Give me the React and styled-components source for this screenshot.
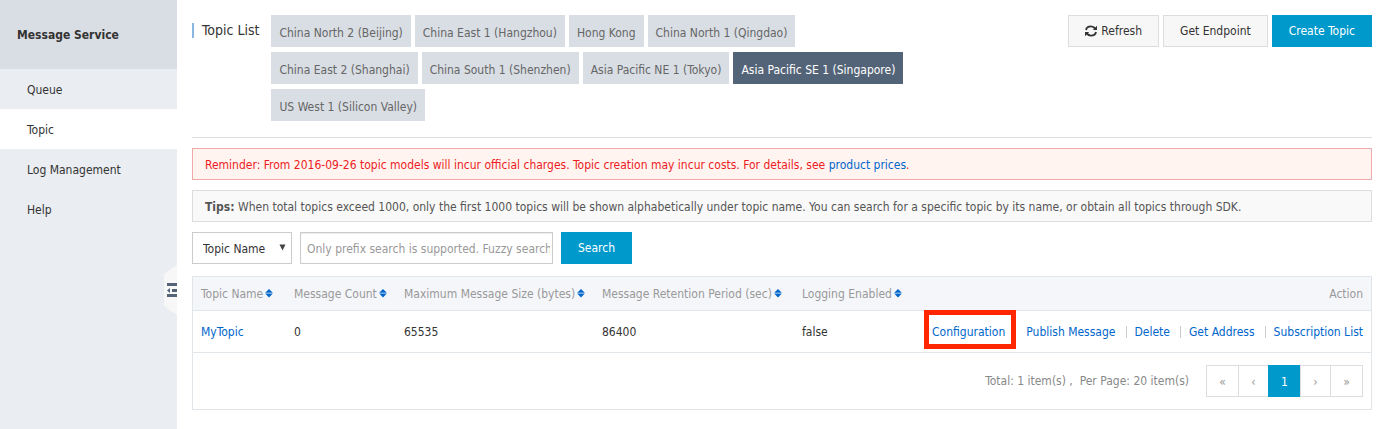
import { useState } from 'react';
import styled, { createGlobalStyle } from 'styled-components';

const GlobalStyle = createGlobalStyle`
    * {
        box-sizing: border-box;
    }
    body {
        margin: 0;
        background-color: #fff;
        color: #333;
    }
    body, button, input, select {
        font-family: "DejaVu Sans Condensed", "DejaVu Sans", sans-serif;
        font-size: 12px;
        line-height: 18px;
    }
    a {
        color: #06c;
        text-decoration: none;
    }
`;

const Page = styled.div`
    display: flex;
    min-height: 100vh;
`;

const Sidebar = styled.aside`
    flex: 0 0 177px;
    background-color: #eaedf1;
    display: flex;
    flex-direction: column;
`;
const Product = styled.div`
    height: 69px;
    padding-left: 17px;
    display: flex;
    align-items: center;
    background-color: #d9dee4;
    font-weight: bold;
`;
const Nav = styled.nav`
    display: flex;
    flex-direction: column;
`;
const NavLink = styled.a`
    height: 40px;
    padding: 2px 0 0 27px;
    display: flex;
    align-items: center;
    color: #333;
    background-color: ${props => props.$active ? "#fff" : "transparent"};
`;
const Collapse = styled.button`
    align-self: flex-end;
    width: 13px;
    height: 50px;
    margin-top: 36px;
    padding: 0;
    border: none;
    background: none;
    cursor: pointer;
    svg {
        display: block;
    }
`;

const Main = styled.main`
    flex: 1;
    min-width: 0;
    padding: 15px 10px 19px 15px;
`;

const Header = styled.header`
    display: flex;
    align-items: flex-start;
    padding-bottom: 16px;
    border-bottom: 1px solid #ddd;
`;
const Title = styled.h1`
    margin: 8px 12px 0 0;
    padding-left: 8px;
    border-left: 2px solid #88b7e0;
    font-size: 14px;
    line-height: 15px;
    font-weight: normal;
    white-space: nowrap;
`;
const Regions = styled.div`
    flex: 0 1 660px;
    display: flex;
    flex-wrap: wrap;
    gap: 5px 4px;
`;
const Region = styled.button`
    height: 32px;
    padding: 3px 8px 0;
    border: none;
    white-space: nowrap;
    cursor: pointer;
    color: ${props => props.$active ? "#fff" : "#666"};
    background-color: ${props => props.$active ? "#546478" : "#d9dee4"};
`;
const Buttons = styled.div`
    display: flex;
    gap: 4px;
    margin-left: auto;
`;
const Button = styled.button`
    height: 32px;
    padding: 0 16px;
    display: flex;
    align-items: center;
    gap: 4px;
    white-space: nowrap;
    cursor: pointer;
    border: 1px solid ${props => props.$primary ? "#09c" : "#ddd"};
    background-color: ${props => props.$primary ? "#09c" : "#f7f7f7"};
    color: ${props => props.$primary ? "#fff" : "#333"};
`;

const Notice = styled.p`
    margin: 10px 0 0;
    padding: 7px 12px 5px;
    border: 1px solid ${props => props.$warn ? "#f1a9a9" : "#ddd"};
    background-color: ${props => props.$warn ? "#fff4f0" : "#f9f9f9"};
    color: ${props => props.$warn ? "#ed1c24" : "#555"};
`;

const SearchBar = styled.form`
    display: flex;
    gap: 8px;
    margin: 10px 0 12px;
`;
const SelectBox = styled.div`
    position: relative;
    svg {
        position: absolute;
        right: 6px;
        top: 12px;
        pointer-events: none;
    }
`;
const Select = styled.select`
    appearance: none;
    width: 100px;
    height: 32px;
    padding: 2px 10px 0;
    border: 1px solid #ccc;
    border-radius: 0;
    background-color: #fff;
    color: #333;
`;
const Input = styled.input`
    width: 253px;
    height: 32px;
    padding: 2px 2px 0 6px;
    border: 1px solid #ccc;
    box-shadow: inset 0 1px 1px rgba(0, 0, 0, 0.08);
    &::placeholder {
        color: #999;
    }
`;

const Panel = styled.section`
    border: 1px solid #e1e6eb;
`;
const Table = styled.table`
    width: 100%;
    border-collapse: separate;
    border-spacing: 0;
    table-layout: fixed;
`;
const Col = styled.col`
    width: ${props => props.$width};
`;
const Th = styled.th`
    height: 34px;
    padding: 0 8px;
    background-color: #f5f6fa;
    border-bottom: 1px solid #e1e6eb;
    color: #999;
    font-weight: normal;
    white-space: nowrap;
    text-align: ${props => props.$right ? "right" : "left"};
`;
const Td = styled.td`
    height: 42px;
    padding: 0 8px;
    border-bottom: 1px solid #e1e6eb;
    white-space: nowrap;
`;
const SortButton = styled.button`
    padding: 0;
    border: none;
    background: none;
    color: inherit;
    display: flex;
    align-items: center;
    gap: 2px;
    cursor: pointer;
`;
const Actions = styled.div`
    display: flex;
    justify-content: flex-end;
    align-items: center;
    height: 41px;
`;
const Action = styled.a`
    & + & {
        margin-left: 10px;
        padding-left: 9px;
        background: linear-gradient(#ccc, #ccc) no-repeat 0 3px / 1px 12px;
    }
`;
const MarkedAction = styled.a`
    margin: 0 15px 4px 0;
    padding: 8px 6px 3px 3px;
    outline: 5px solid #ff2600;
`;

const Footer = styled.footer`
    display: flex;
    justify-content: flex-end;
    padding: 12px 8px;
    color: #888;
`;
const Totals = styled.span`
    margin-right: 18px;
    line-height: 32px;
    white-space: pre;
`;
const Pager = styled.div`
    display: flex;
`;
const PageButton = styled.button`
    height: 32px;
    width: ${props => props.$wide ? "33px" : "31px"};
    margin-left: -1px;
    padding: 2px 0 0;
    cursor: pointer;
    border: 1px solid ${props => props.$active ? "#09c" : "#ddd"};
    background-color: ${props => props.$active ? "#09c" : "#fff"};
    color: ${props => props.$active ? "#fff" : "#999"};
`;

const regions = [
    "China North 2 (Beijing)",
    "China East 1 (Hangzhou)",
    "Hong Kong",
    "China North 1 (Qingdao)",
    "China East 2 (Shanghai)",
    "China South 1 (Shenzhen)",
    "Asia Pacific NE 1 (Tokyo)",
    "Asia Pacific SE 1 (Singapore)",
    "US West 1 (Silicon Valley)",
];

const columns = [
    { label: "Topic Name", width: "93px" },
    { label: "Message Count", width: "110px" },
    { label: "Maximum Message Size (bytes)", width: "198px" },
    { label: "Message Retention Period (sec)", width: "200px" },
    { label: "Logging Enabled", width: "120px" },
];

const SortIcon = () => (
    <svg width="8" height="10" viewBox="0 0 8 10" fill="#06c" aria-hidden="true">
        <path d="M4 0L7.800 3.800H0.200Z" />
        <path d="M4 8.400L7.800 4.600H0.200Z" />
    </svg>
);

const RefreshIcon = () => (
    <svg width="12" height="12" viewBox="0 0 12 12" fill="none" stroke="#333" strokeWidth="1.900" aria-hidden="true">
        <path d="M1 5C1.500 2.600 3.500 1.400 6 1.400C7.800 1.400 9.200 2.200 10.200 3.600" />
        <path d="M11 7C10.500 9.400 8.500 10.600 6 10.600C4.200 10.600 2.800 9.800 1.800 8.400" />
        <path d="M12 0.800V5H7.800Z" fill="#333" stroke="none" />
        <path d="M0 11.200V7H4.200Z" fill="#333" stroke="none" />
    </svg>
);

const App = () => {
    const [region, setRegion] = useState("Asia Pacific SE 1 (Singapore)");
    const [keyword, setKeyword] = useState("");

    return (
        <>
            <GlobalStyle />
            <Page>
                <Sidebar>
                    <Product>Message Service</Product>
                    <Nav>
                        <NavLink href="#queue">Queue</NavLink>
                        <NavLink href="#topic" $active>Topic</NavLink>
                        <NavLink href="#log">Log Management</NavLink>
                        <NavLink href="#help">Help</NavLink>
                    </Nav>
                    <Collapse aria-label="Collapse menu">
                        <svg width="13" height="50" viewBox="0 0 13 50">
                            <path d="M13 0L0 9V41L13 50Z" fill="#f7f7f7" />
                            <path d="M3 18h10v3H3zM3 29h10v3H3zM8 24h5v3H8zM3 25.500L6 23v5z" fill="#546478" />
                        </svg>
                    </Collapse>
                </Sidebar>
                <Main>
                    <Header>
                        <Title>Topic List</Title>
                        <Regions>
                            {regions.map((name) => (
                                <Region key={name} $active={name === region} onClick={() => setRegion(name)}>
                                    {name}
                                </Region>
                            ))}
                        </Regions>
                        <Buttons>
                            <Button><RefreshIcon />Refresh</Button>
                            <Button>Get Endpoint</Button>
                            <Button $primary>Create Topic</Button>
                        </Buttons>
                    </Header>
                    <Notice $warn>
                        Reminder: From 2016-09-26 topic models will incur official charges. Topic creation may incur costs. For details, see <a href="#prices">product prices</a>.
                    </Notice>
                    <Notice>
                        <b>Tips:</b> When total topics exceed 1000, only the first 1000 topics will be shown alphabetically under topic name. You can search for a specific topic by its name, or obtain all topics through SDK.
                    </Notice>
                    <SearchBar onSubmit={(e) => e.preventDefault()}>
                        <SelectBox>
                            <Select aria-label="Search by">
                                <option>Topic Name</option>
                            </Select>
                            <svg width="7" height="7" viewBox="0 0 7 7" fill="#444" aria-hidden="true">
                                <path d="M0.500 0.500H6.500L3.500 6.500Z" />
                            </svg>
                        </SelectBox>
                        <Input
                            aria-label="Topic name"
                            placeholder="Only prefix search is supported. Fuzzy search is not supported"
                            value={keyword}
                            onChange={(e) => setKeyword(e.target.value)}
                        />
                        <Button $primary>Search</Button>
                    </SearchBar>
                    <Panel>
                        <Table>
                            <colgroup>
                                {columns.map((col) => <Col key={col.label} $width={col.width} />)}
                                <Col $width="auto" />
                            </colgroup>
                            <thead>
                                <tr>
                                    {columns.map((col) => (
                                        <Th key={col.label}>
                                            <SortButton>{col.label}<SortIcon /></SortButton>
                                        </Th>
                                    ))}
                                    <Th $right>Action</Th>
                                </tr>
                            </thead>
                            <tbody>
                                <tr>
                                    <Td><a href="#mytopic">MyTopic</a></Td>
                                    <Td>0</Td>
                                    <Td>65535</Td>
                                    <Td>86400</Td>
                                    <Td>false</Td>
                                    <Td>
                                        <Actions>
                                            <MarkedAction href="#configuration">Configuration</MarkedAction>
                                            <Action href="#publish">Publish Message</Action>
                                            <Action href="#delete">Delete</Action>
                                            <Action href="#address">Get Address</Action>
                                            <Action href="#subscriptions">Subscription List</Action>
                                        </Actions>
                                    </Td>
                                </tr>
                            </tbody>
                        </Table>
                        <Footer>
                            <Totals>Total: 1 item(s) ,  Per Page: 20 item(s)</Totals>
                            <Pager>
                                <PageButton $wide aria-label="First page">«</PageButton>
                                <PageButton aria-label="Previous page">‹</PageButton>
                                <PageButton $wide $active>1</PageButton>
                                <PageButton aria-label="Next page">›</PageButton>
                                <PageButton $wide aria-label="Last page">»</PageButton>
                            </Pager>
                        </Footer>
                    </Panel>
                </Main>
            </Page>
        </>
    )
}

export default App
